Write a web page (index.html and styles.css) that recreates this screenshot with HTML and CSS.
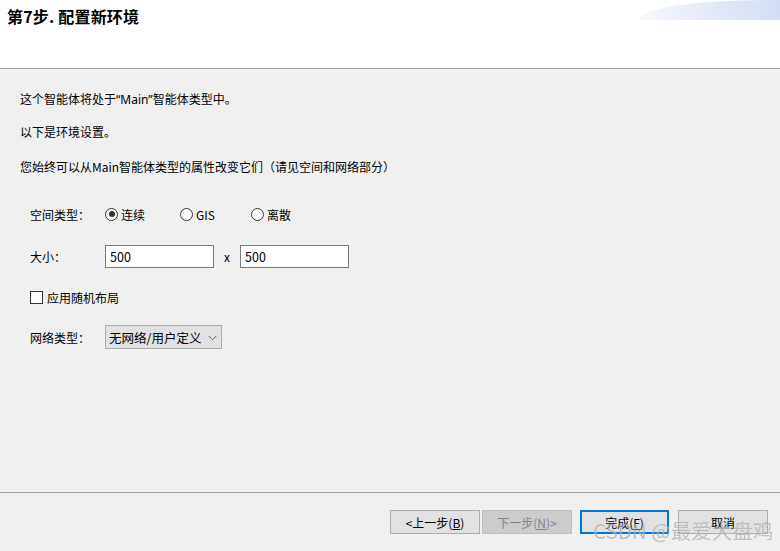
FILE: index.html
```html
<!DOCTYPE html>
<html lang="zh">
<head>
<meta charset="utf-8">
<title>第7步. 配置新环境</title>
<link rel="stylesheet" href="styles.css">
</head>
<body>
<div class="wizard">
  <header class="header">
    <h1 class="title">第7步. 配置新环境</h1>
    <div class="swoosh"></div>
  </header>
  <main class="content">
    <p class="para p1">这个智能体将处于<span class="latin">“Main”</span>智能体类型中。</p>
    <p class="para p2">以下是环境设置。</p>
    <p class="para p3">您始终可以从Main智能体类型的属性改变它们（请见空间和网络部分）</p>

    <div class="row row-radio">
      <span class="label">空间类型：</span>
      <span class="radio-opt opt1"><span class="radio checked"></span>连续</span>
      <span class="radio-opt opt2"><span class="radio"></span>GIS</span>
      <span class="radio-opt"><span class="radio"></span>离散</span>
    </div>

    <div class="row row-size">
      <span class="label">大小：</span>
      <span class="input">500</span>
      <span class="times">x</span>
      <span class="input">500</span>
    </div>

    <div class="row row-check">
      <span class="checkbox"></span>应用随机布局
    </div>

    <div class="row row-net">
      <span class="label">网络类型：</span>
      <span class="select">无网络/用户定义
        <svg class="chev" width="9" height="6" viewBox="0 0 9 6"><polyline points="0.5,0.8 4.5,4.8 8.5,0.8" fill="none" stroke="#606060" stroke-width="1"/></svg>
      </span>
    </div>
  </main>
  <footer class="footer">
    <div class="btn-group">
      <span class="btn">&lt;上一步(<u>B</u>)</span>
      <span class="btn disabled">下一步(<u>N</u>)&gt;</span>
    </div>
    <span class="btn primary">完成(<u>F</u>)</span>
    <span class="btn">取消</span>
    <div class="watermark">CSDN @最爱大盘鸡</div>
  </footer>
</div>
</body>
</html>
```
FILE: styles.css
```css
html, body {
  margin: 0;
  padding: 0;
}
body {
  width: 780px;
  height: 551px;
  overflow: hidden;
  background: #f0f0f0;
  font-family: "Noto Sans CJK SC", "Noto Sans", sans-serif;
  font-size: 12px;
  color: #000;
}
.wizard {
  display: flex;
  flex-direction: column;
  height: 551px;
}
.header {
  position: relative;
  height: 69px;
  box-sizing: border-box;
  background: #fff;
  border-bottom: 1px solid #a0a0a0;
  flex: none;
}
.title {
  margin: 0;
  padding: 5px 0 0 7px;
  font-size: 16px;
  line-height: 22px;
  font-weight: bold;
  letter-spacing: 0.2px;
}
.swoosh {
  position: absolute;
  top: 0;
  right: 0;
  width: 142px;
  height: 20px;
  border-top-left-radius: 142px 22px;
  background: linear-gradient(to right, rgba(240,244,252,0.6), #d3dcf3);
}
.content {
  flex: 1;
  padding: 22px 0 0 20px;
}
.para {
  margin: 0;
  line-height: 16px;
  white-space: nowrap;
}
.latin {
  font-family: "Noto Sans", "DejaVu Sans", sans-serif;
}
.p1 { margin-bottom: 16px; }
.p2 { margin-bottom: 19px; }
.row {
  display: flex;
  align-items: center;
  margin-left: 10px;
}
.label {
  width: 75px;
  flex: none;
}
.row-radio {
  margin-top: 31px;
  height: 16px;
}
.radio-opt {
  display: flex;
  align-items: center;
}
.opt1 { width: 75px; }
.opt2 { width: 71px; }
.radio {
  width: 11px;
  height: 11px;
  border: 1px solid #333;
  border-radius: 50%;
  background: #fff;
  margin-right: 3px;
  position: relative;
  box-sizing: content-box;
}
.radio.checked::after {
  content: "";
  position: absolute;
  left: 2.5px;
  top: 2.5px;
  width: 6px;
  height: 6px;
  border-radius: 50%;
  background: #333;
}
.row-size {
  margin-top: 23px;
  height: 23px;
}
.input {
  box-sizing: border-box;
  width: 109px;
  height: 23px;
  border: 1px solid #7a7a7a;
  background: #fff;
  padding-left: 4px;
  line-height: 21px;
  font-size: 12.5px;
}
.times {
  width: 26px;
  text-align: center;
  font-size: 12px;
}
.row-check {
  margin-top: 21px;
  height: 16px;
}
.checkbox {
  box-sizing: border-box;
  width: 13px;
  height: 13px;
  border: 1px solid #333;
  background: #fff;
  margin-right: 4px;
}
.row-net {
  margin-top: 20px;
  height: 24px;
}
.select {
  box-sizing: border-box;
  width: 117px;
  height: 24px;
  border: 1px solid #adadad;
  background: #e1e1e1;
  display: flex;
  align-items: center;
  padding-left: 3px;
  font-size: 12.5px;
  position: relative;
}
.chev {
  position: absolute;
  right: 4px;
  top: 9px;
}
.footer {
  position: relative;
  flex: none;
  border-top: 1px solid #a0a0a0;
  display: flex;
  justify-content: flex-end;
  align-items: flex-start;
  padding: 17px 12px 0 0;
  box-sizing: border-box;
  height: 59px;
  gap: 9px;
}
.btn-group {
  display: flex;
  gap: 2px;
  margin-right: -1px;
}
.btn {
  box-sizing: border-box;
  width: 90px;
  height: 24px;
  border: 1px solid #adadad;
  background: #e1e1e1;
  display: flex;
  align-items: center;
  justify-content: center;
  font-size: 12px;
}
.btn u {
  text-decoration: underline;
  text-underline-offset: 1px;
}
.btn.disabled {
  background: #cccccc;
  border-color: #bfbfbf;
  color: #838383;
}
.btn.primary {
  border: 2px solid #0078d7;
  width: 89px;
}
.watermark {
  position: absolute;
  left: 593px;
  top: 22px;
  font-size: 20.5px;
  line-height: 30px;
  color: rgba(120, 120, 120, 0.45);
  white-space: nowrap;
  pointer-events: none;
  text-shadow: 0 0 1px rgba(255,255,255,0.6);
}
```
